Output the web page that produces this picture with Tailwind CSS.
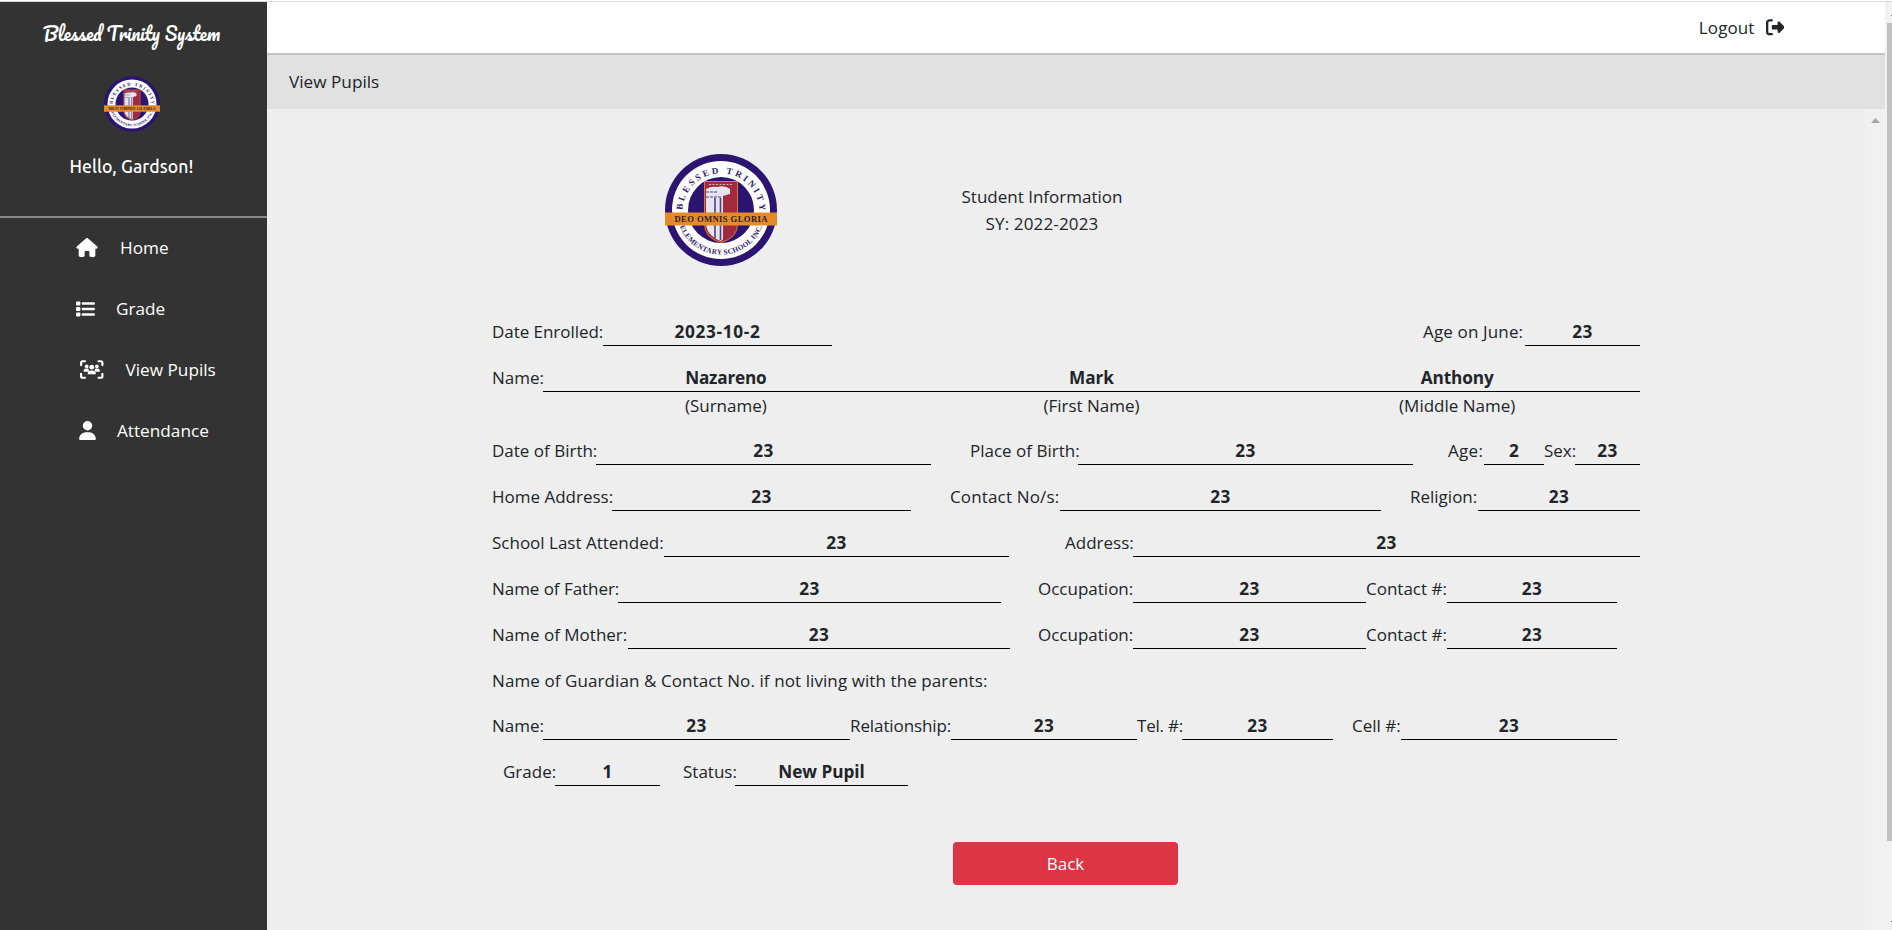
<!DOCTYPE html>
<html lang="en">
<head>
<meta charset="utf-8">
<title>Blessed Trinity System</title>
<script src="https://cdn.jsdelivr.net/npm/@tailwindcss/browser@4"></script>
</head>
<body class="h-[930px] overflow-hidden bg-[#eeeeee] font-['Open_Sans','Noto_Sans',sans-serif] text-[17px] leading-[26px] font-normal text-[#212529]">
<div class="flex h-full flex-col">
  <div class="h-0.5 shrink-0 border-b border-[#d9d9db] bg-white"></div>
  <div class="flex min-h-0 flex-1">

    <aside class="flex w-[267px] shrink-0 flex-col bg-[#333333] text-white">
      <div class="flex h-[216px] flex-col items-center border-b-2 border-[#888888] pr-[4px]">
        <h1 class="mt-4 h-[32px] leading-[32px] whitespace-nowrap font-[Pacifico,cursive] text-[18px] font-normal">Blessed Trinity System</h1>
        <svg class="mt-[26px] size-[56px]" viewBox="0 0 112 112"><use href="#seal"/></svg>
        <p class="mt-[20px] font-[Ubuntu,'Noto_Sans',sans-serif] text-[17.6px] tracking-[0.1px] leading-[30px] font-medium">Hello, Gardson!</p>
      </div>
      <nav class="-mt-px flex flex-col text-[17.2px]">
        <a class="flex h-[61px] items-center pl-[76px]">
          <svg class="mr-[22px] h-[19px] w-[22px]" viewBox="0 0 576 512" fill="currentColor"><path d="M575.8 255.500c0 18-15 32.100-32 32.100h-32l.7 160.200c0 2.700-.2 5.400-.5 8.100V472c0 22.100-17.900 40-40 40H456c-1.100 0-2.200 0-3.300-.1c-1.400 .1-2.800 .1-4.200 .1H416 392c-22.100 0-40-17.900-40-40V448 384c0-17.700-14.300-32-32-32H256c-17.700 0-32 14.300-32 32v64 24c0 22.100-17.900 40-40 40H160 128.100c-1.500 0-3-.1-4.500-.2c-1.200 .1-2.400 .2-3.600 .2H104c-22.100 0-40-17.900-40-40V360c0-.9 0-1.900 .1-2.800V287.600H32c-18 0-32-14-32-32.100c0-9 3-17 10-24L266.400 8c7-7 15-8 22-8s15 2 21 7L564.800 231.500c8 7 12 15 11 24z"/></svg>Home</a>
        <a class="flex h-[61px] items-center pl-[76px]">
          <svg class="mr-[21px] h-[16px] w-[19px]" viewBox="0 0 19 16" fill="currentColor"><rect y="0.500" width="4.400" height="4" rx="1"/><rect y="6" width="4.400" height="4" rx="1"/><rect y="11.500" width="4.400" height="4" rx="1"/><rect x="5.600" y="1.200" width="13.400" height="2.500" rx="1.200"/><rect x="5.600" y="6.700" width="13.400" height="2.500" rx="1.200"/><rect x="5.600" y="12.200" width="13.400" height="2.500" rx="1.200"/></svg>Grade</a>
        <a class="flex h-[61px] items-center pl-[80px]">
          <svg class="mr-[22px] h-[19px] w-[23.500px]" viewBox="0 0 640 512" fill="currentColor"><path fill="none" stroke="currentColor" stroke-width="58" stroke-linecap="round" d="M30 136V72Q30 30 72 30H136M504 30H568Q610 30 610 72V136M610 376V440Q610 482 568 482H504M136 482H72Q30 482 30 440V376"/><circle cx="320" cy="192" r="66"/><circle cx="180" cy="170" r="50"/><circle cx="460" cy="170" r="50"/><path d="M208 371c0-45 37-91 91-91h42c54 0 91 46 91 91c0 10-6 13-13 13H221c-7 0-13-3-13-13zM96 300c0-38 30-68 68-68h32c12 0 24 3 34 8c2 30 14 50 34 66c-14 4-26 8-35 14H114c-10 0-18-8-18-20zM544 300c0-38-30-68-68-68h-32c-12 0-24 3-34 8c-2 30-14 50-34 66c14 4 26 8 35 14H526c10 0 18-8 18-20z"/></svg>View Pupils</a>
        <a class="flex h-[61px] items-center pl-[79px]">
          <svg class="mr-[21px] h-[19px] w-[17px]" viewBox="0 0 448 512" fill="currentColor"><path d="M224 256A128 128 0 1 0 224 0a128 128 0 1 0 0 256zm-45.700 48C79.800 304 0 383.800 0 482.300C0 498.700 13.300 512 29.700 512H418.300c16.400 0 29.700-13.300 29.700-29.700C448 383.800 368.200 304 269.700 304H178.300z"/></svg>Attendance</a>
      </nav>
    </aside>

    <div class="flex min-w-0 flex-1 flex-col">
      <header class="flex h-[53px] shrink-0 items-center justify-end border-b-2 border-[#c4c4c4] bg-white pr-[101px]">
        <span class="tracking-[0.1px]">Logout</span>
        <svg class="ml-[11px] size-[18.500px]" viewBox="0 0 512 512" fill="currentColor"><path d="M377.900 105.900L500.700 228.700c7.200 7.200 11.300 17.100 11.300 27.300s-4.100 20.100-11.300 27.300L377.900 406.100c-6.400 6.400-15 9.900-24 9.900c-18.700 0-33.900-15.200-33.900-33.900l0-62.100-128 0c-17.700 0-32-14.300-32-32l0-64c0-17.700 14.300-32 32-32l128 0 0-62.100c0-18.700 15.200-33.900 33.900-33.900c9 0 17.600 3.600 24 9.900zM160 96L96 96c-17.700 0-32 14.300-32 32l0 256c0 17.700 14.300 32 32 32l64 0c17.700 0 32 14.300 32 32s-14.300 32-32 32l-64 0c-53 0-96-43-96-96L0 128C0 75 43 32 96 32l64 0c17.700 0 32 14.300 32 32s-14.300 32-32 32z"/></svg>
      </header>
      <div class="flex h-[54px] shrink-0 items-center bg-[#e1e1e1] pl-[22px] text-[17.2px]">View Pupils</div>

      <div class="flex min-h-0 flex-1">
        <main class="flex flex-1 flex-col pl-[225px]">
          <div class="flex h-[157px] items-start pt-[45px] pl-[173px]">
            <svg class="size-[112px]" viewBox="0 0 112 112">
              <g id="seal">
                <circle cx="56" cy="56" r="56" fill="#2b1570"/>
                <circle cx="56" cy="56" r="49" fill="#ffffff"/>
                <circle cx="56" cy="56" r="33" fill="#2b1570"/>
                <path d="M39.500 27.500H72.500V70Q72.500 84 56 88.500Q39.500 84 39.500 70Z" fill="#a12a3c" stroke="#d9793a" stroke-width="1"/>
                <path d="M41 35Q46 32 52 33Q60 31 65 35V40L58 42V85.500L56 87Q42 82 41 70Z" fill="#e4e3ee"/>
                <path d="M50 44V84M55.500 44V86" stroke="#4b4386" stroke-width="1.600"/>
                <path d="M41 38H52M41 43H57" stroke="#4b4386" stroke-width="1" stroke-dasharray="3 1"/>
                <path d="M44 30.500H68" stroke="#e5b9a0" stroke-width="1" stroke-dasharray="2 1.500"/>
                <path id="arcTop" d="M17.300 58A38.700 38.700 0 0 1 94.700 58" fill="none"/>
                <path id="arcBottom" d="M11.500 56A44.500 44.500 0 0 0 100.500 56" fill="none"/>
                <text font-family="Liberation Serif" font-weight="700" font-size="9" fill="#2b1570"><textPath href="#arcTop" startOffset="2" textLength="118">BLESSED TRINITY</textPath></text>
                <text font-family="Liberation Serif" font-weight="700" font-size="7.200" fill="#2b1570"><textPath href="#arcBottom" startOffset="17" textLength="106">ELEMENTARY SCHOOL INC.</textPath></text>
                <path d="M0 58.500H112V71.500H0Z" fill="#e48a2a"/>
                <text x="56" y="67.600" text-anchor="middle" textLength="93" font-family="Liberation Serif" font-weight="700" font-size="8.600" fill="#2a1a22">DEO OMNIS GLORIA</text>
              </g>
            </svg>
            <div class="mt-[29px] ml-[165px] w-[200px] text-center leading-[27px]">Student Information<br><span class="tracking-[0.15px]">SY: 2022-2023</span></div>
          </div>

          <div class="mt-[34px] flex w-[1148px] flex-col gap-5 text-center [&_b]:h-[26px] [&_b]:box-content [&_b]:border-b [&_b]:border-black [&_b]:text-[17.2px] [&_b]:font-bold [&_b]:tracking-[0.3px] [&_span]:whitespace-nowrap [&_span]:text-left">
            <div class="flex h-[26px] mt-[19px]"><span class="w-[111px] tracking-[-0.05px]">Date Enrolled:</span><b class="w-[229px]"><i class="tracking-[0.7px] not-italic">2023-10-2</i></b><span class="ml-[591px] w-[102px] tracking-[0.15px]">Age on June:</span><b class="w-[115px]">23</b></div>
            <div class="flex h-[26px]"><span class="w-[51px]">Name:</span><b class="flex-1"><i class="tracking-[-0.2px] not-italic">Nazareno</i></b><b class="flex-1"><i class="tracking-normal not-italic">Mark</i></b><b class="flex-1"><i class="tracking-[-0.1px] not-italic">Anthony</i></b></div>
            <div class="-mt-[18px] -mb-px flex h-[26px] pl-[51px]"><p class="flex-1">(Surname)</p><p class="flex-1">(First Name)</p><p class="flex-1">(Middle Name)</p></div>
            <div class="flex h-[26px]"><span class="w-[104px]">Date of Birth:</span><b class="w-[335px]">23</b><span class="ml-[39px] w-[108px]">Place of Birth:</span><b class="w-[335px]">23</b><span class="ml-[35px] w-[36px] tracking-[0.3px]">Age:</span><b class="w-[60px]">2</b><span class="w-[31px]">Sex:</span><b class="w-[65px]">23</b></div>
            <div class="flex h-[26px]"><span class="w-[120px]">Home Address:</span><b class="w-[299px]">23</b><span class="ml-[39px] w-[110px] tracking-[0.15px]">Contact No/s:</span><b class="w-[321px]">23</b><span class="ml-[29px] w-[68px]">Religion:</span><b class="w-[162px]">23</b></div>
            <div class="flex h-[26px]"><span class="w-[172px]">School Last Attended:</span><b class="w-[345px]">23</b><span class="ml-[56px] w-[68px]">Address:</span><b class="w-[507px]">23</b></div>
            <div class="flex h-[26px]"><span class="w-[126px] tracking-[-0.05px]">Name of Father:</span><b class="w-[383px]">23</b><span class="ml-[37px] w-[95px]">Occupation:</span><b class="w-[233px]">23</b><span class="w-[81px]">Contact #:</span><b class="w-[170px]">23</b></div>
            <div class="flex h-[26px]"><span class="w-[136px]">Name of Mother:</span><b class="w-[382px]">23</b><span class="ml-[28px] w-[95px]">Occupation:</span><b class="w-[233px]">23</b><span class="w-[81px]">Contact #:</span><b class="w-[170px]">23</b></div>
            <div class="flex h-[26px]"><span class="tracking-[0.09px]">Name of Guardian &amp; Contact No. if not living with the parents:</span></div>
            <div class="-mt-px flex h-[26px]"><span class="w-[51px]">Name:</span><b class="w-[307px]">23</b><span class="w-[101px] tracking-[-0.1px]">Relationship:</span><b class="w-[186px]">23</b><span class="w-[45px] tracking-[-0.2px]">Tel. #:</span><b class="w-[151px]">23</b><span class="ml-[19px] w-[49px]">Cell #:</span><b class="w-[216px]">23</b></div>
            <div class="flex h-[26px] pl-[11px]"><span class="w-[52px]">Grade:</span><b class="w-[105px]">1</b><span class="ml-[23px] w-[52px]">Status:</span><b class="w-[173px]"><i class="tracking-[-0.05px] not-italic">New Pupil</i></b></div>
          </div>

          <button class="mt-[57px] ml-[461px] h-[43px] w-[225px] rounded-[4px] bg-[#dc3545] text-white">Back</button>
        </main>
        <div class="flex w-5 justify-center bg-[#f1f1f1] pt-[9px]">
          <svg class="h-[5px] w-[9px]" viewBox="0 0 9 5" fill="#a3a3a3"><path d="M4.500 0L9 5H0Z"/></svg>
        </div>
      </div>
    </div>

    <div class="flex w-[7px] shrink-0 flex-col items-end bg-[#f1f1f1]">
      <div class="mt-[13px] h-px w-px bg-[#777777]"></div>
      <div class="mt-[7px] h-[818px] w-[5px] bg-[#c1c1c1]"></div>
      <div class="mt-[80px] h-px w-px bg-[#505050]"></div>
    </div>
  </div>
</div>
</body>
</html>
